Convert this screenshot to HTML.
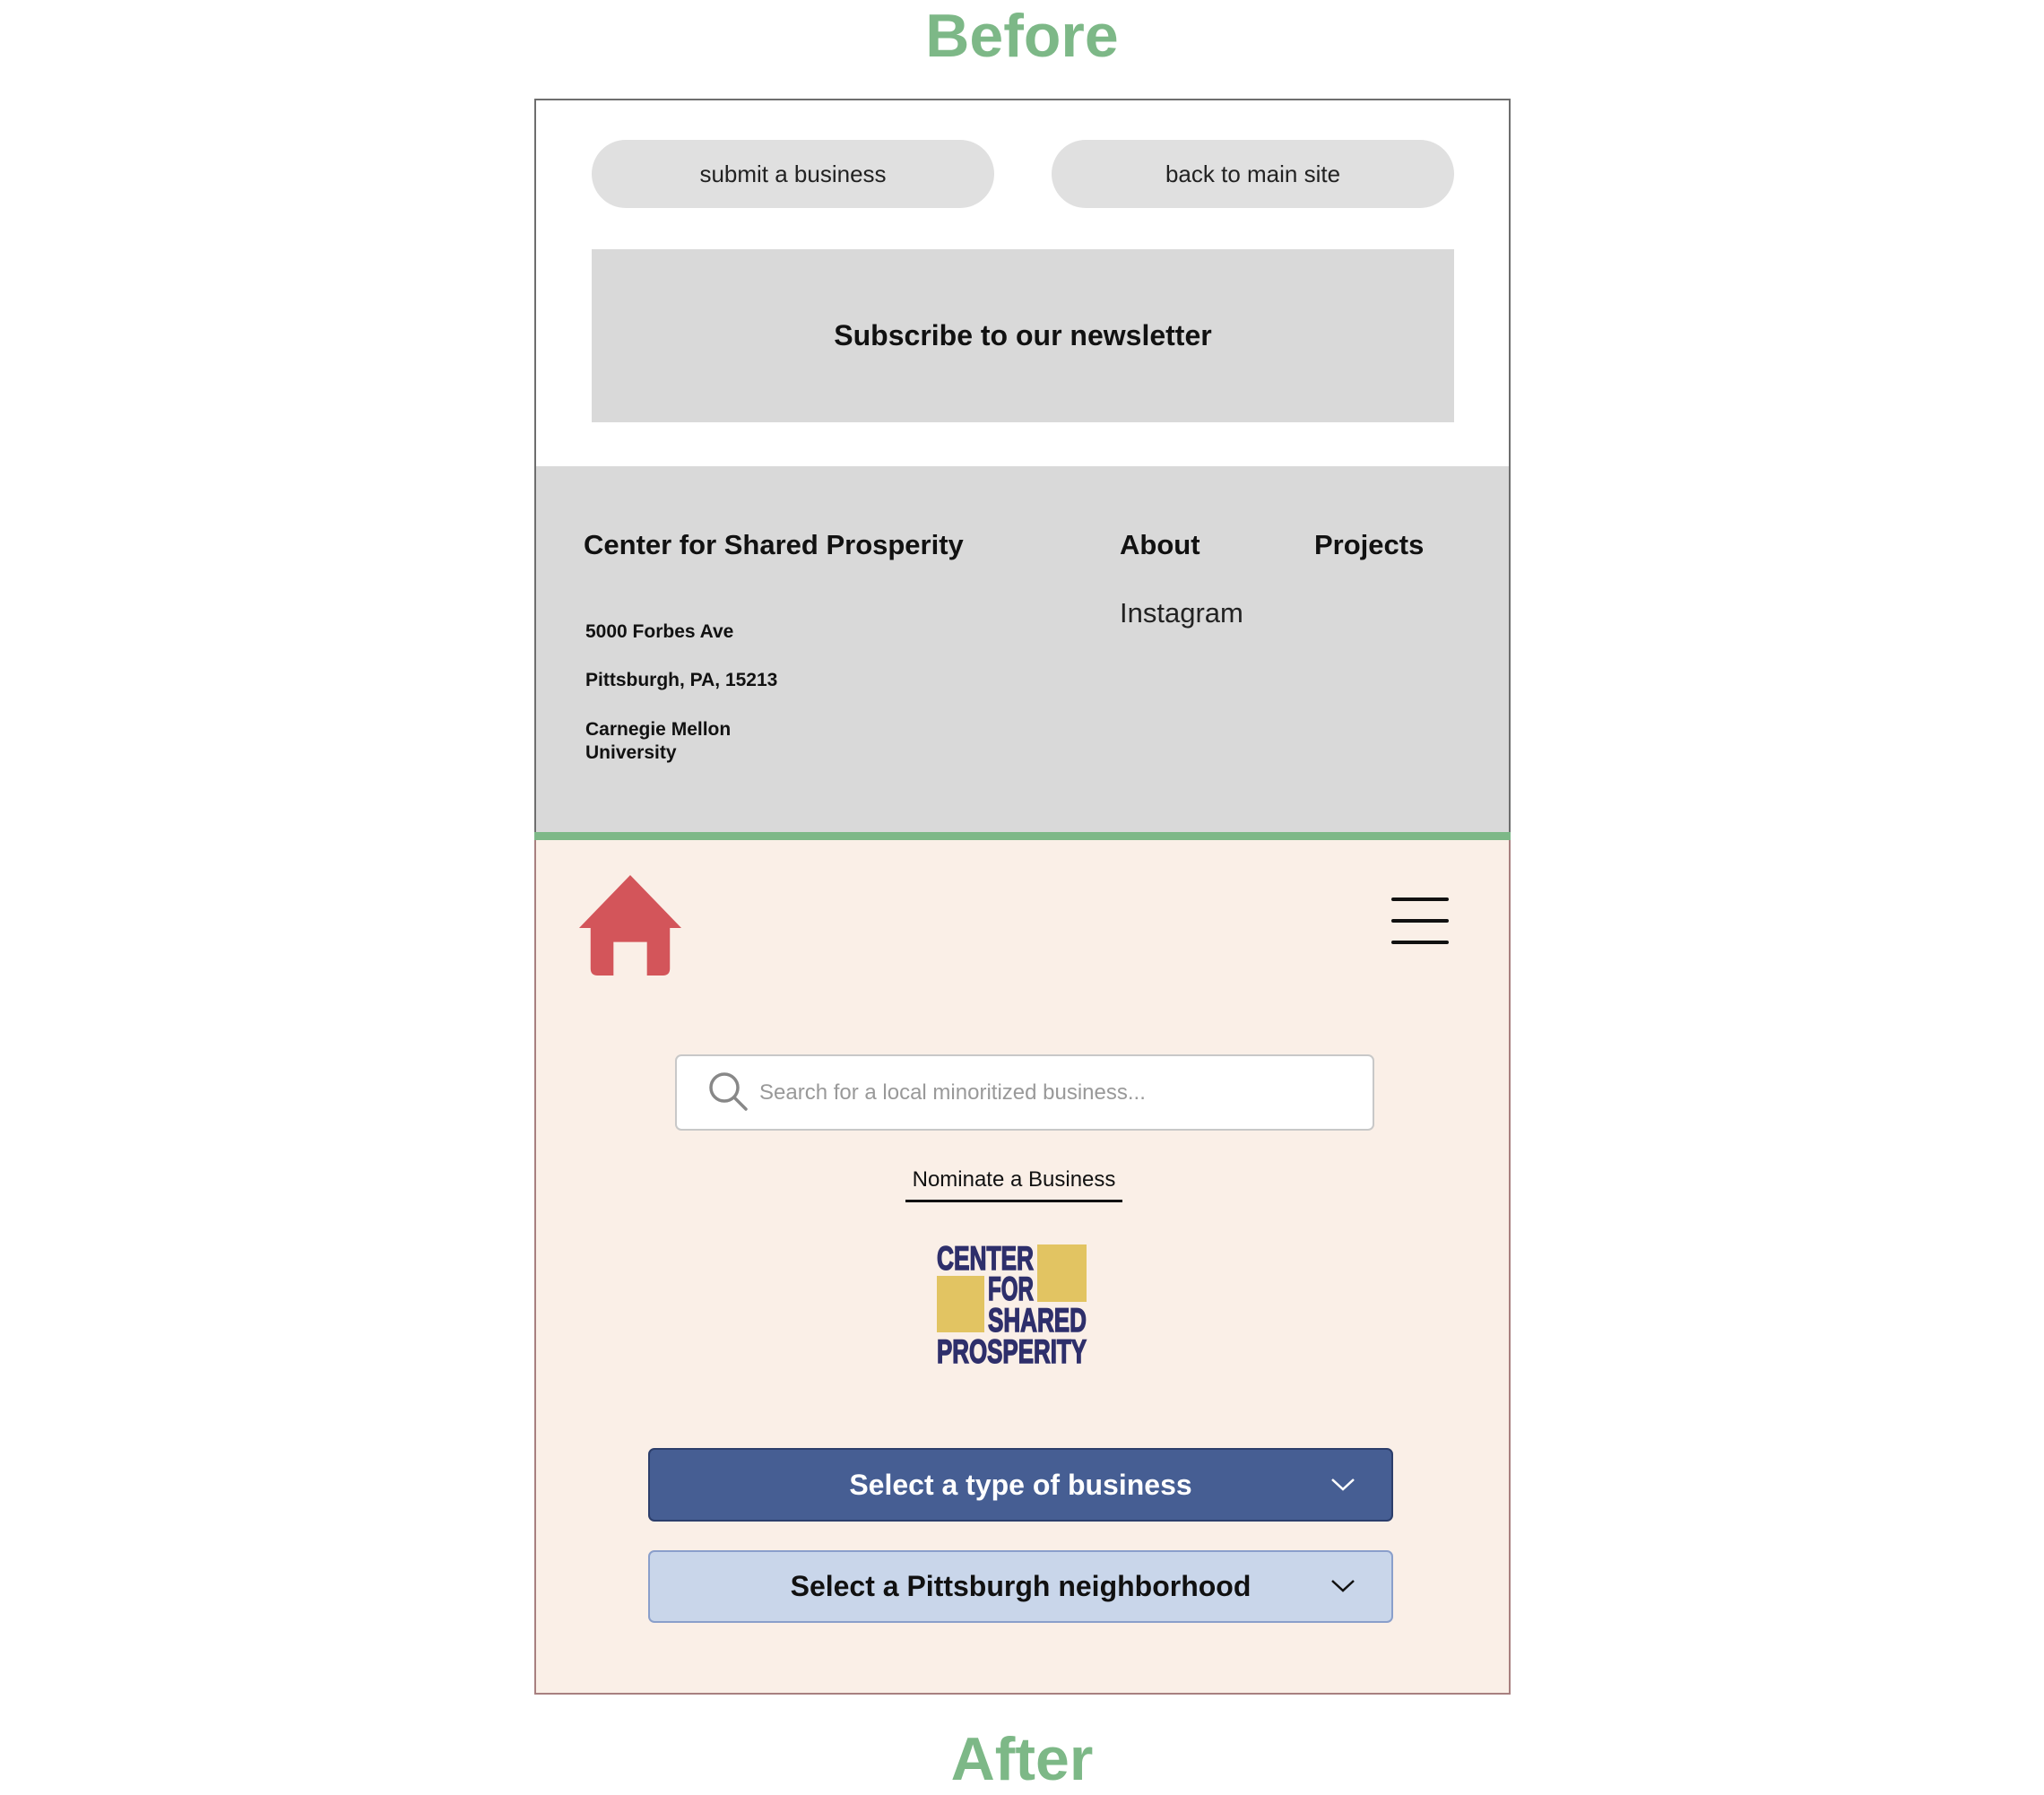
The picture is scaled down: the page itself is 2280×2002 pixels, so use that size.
<!DOCTYPE html>
<html><head><meta charset="utf-8"><style>
*{margin:0;padding:0;box-sizing:border-box}
body{width:2280px;height:2002px;background:#fff;position:relative;font-family:"Liberation Sans",sans-serif;overflow:hidden}
.a{position:absolute}
.title{color:#7db887;font-weight:bold;font-size:68px;width:2280px;text-align:center;left:0}
.pill{background:#e0e0e0;border-radius:38px;height:76px;width:449px;top:156px;font-size:26px;color:#222;text-align:center;line-height:76px}
.ft{font-weight:bold;color:#111}
</style></head><body>
<div class="a title" style="top:0;line-height:80px">Before</div>
<div class="a" style="left:596px;top:110px;width:1089px;height:1780px;border:2px solid #6e6e6e;background:#fff"></div>
<div class="a pill" style="left:660px">submit a business</div>
<div class="a pill" style="left:1173px">back to main site</div>
<div class="a" style="left:660px;top:278px;width:962px;height:193px;background:#d9d9d9;text-align:center;line-height:193px;font-weight:bold;font-size:32px;color:#111">Subscribe to our newsletter</div>
<div class="a" style="left:598px;top:520px;width:1085px;height:408px;background:#d9d9d9"></div>
<div class="a ft" style="left:651px;top:590px;font-size:31px">Center for Shared Prosperity</div>
<div class="a ft" style="left:1249px;top:590px;font-size:31px">About</div>
<div class="a ft" style="left:1466px;top:590px;font-size:31px">Projects</div>
<div class="a" style="left:1249px;top:666px;font-size:31px;color:#222">Instagram</div>
<div class="a ft" style="left:653px;top:693px;font-size:21px">5000 Forbes Ave</div>
<div class="a ft" style="left:653px;top:747px;font-size:21px">Pittsburgh, PA, 15213</div>
<div class="a ft" style="left:653px;top:801px;font-size:21px;line-height:26px">Carnegie Mellon<br>University</div>
<div class="a" style="left:596px;top:928px;width:1089px;height:9px;background:#7db887"></div>
<div class="a" style="left:596px;top:937px;width:1089px;height:953px;background:#faefe7;border:2px solid #a88080;border-top:none"></div>
<svg class="a" style="left:645px;top:974px" width="116" height="116" viewBox="0 0 118 118">
<path d="M59 2 L117 62 L104 62 L104 108 Q104 116 96 116 L78 116 L78 78 L40 78 L40 116 L22 116 Q14 116 14 108 L14 62 L1 62 Z" fill="#d3555a"/>
</svg>
<div class="a" style="left:1552px;top:1001px;width:64px;height:4px;background:#111;border-radius:2px"></div>
<div class="a" style="left:1552px;top:1025px;width:64px;height:4px;background:#111;border-radius:2px"></div>
<div class="a" style="left:1552px;top:1049px;width:64px;height:4px;background:#111;border-radius:2px"></div>
<div class="a" style="left:753px;top:1176px;width:780px;height:85px;background:#fff;border:2px solid #c8c8c8;border-radius:7px"></div>
<svg class="a" style="left:790px;top:1195px" width="46" height="46" viewBox="0 0 46 46"><circle cx="18" cy="18" r="15" fill="none" stroke="#888" stroke-width="3.5"/><path d="M29 29 L42 42" stroke="#888" stroke-width="3.5" stroke-linecap="round"/></svg>
<div class="a" style="left:847px;top:1204px;font-size:24px;color:#999;line-height:30px">Search for a local minoritized business...</div>
<div class="a" style="left:1010px;top:1302px;width:242px;text-align:center;font-size:24px;color:#111">Nominate a Business</div>
<div class="a" style="left:1010px;top:1338px;width:242px;height:3px;background:#111"></div>
<svg class="a" style="left:1045px;top:1388px" width="168" height="134" viewBox="0 0 168 134">
<rect x="0" y="35" width="53" height="63" fill="#e2c462"/>
<rect x="112" y="0" width="55" height="64" fill="#e2c462"/>
<g fill="#2e2f6b" stroke="#2e2f6b" stroke-width="1.5" font-family="Liberation Sans Narrow,Liberation Sans,sans-serif" font-weight="bold" font-size="37">
<text x="0" y="28" textLength="108" lengthAdjust="spacingAndGlyphs">CENTER</text>
<text x="57" y="62" textLength="51" lengthAdjust="spacingAndGlyphs">FOR</text>
<text x="57" y="97" textLength="110" lengthAdjust="spacingAndGlyphs">SHARED</text>
<text x="0" y="132" textLength="167" lengthAdjust="spacingAndGlyphs">PROSPERITY</text>
</g></svg>
<div class="a" style="left:723px;top:1615px;width:831px;height:82px;background:#465e93;border:2px solid #2c3e6b;border-radius:7px;color:#fff;font-weight:bold;font-size:32px;line-height:78px;text-align:center">Select a type of business</div>
<svg class="a" style="left:1484px;top:1648px" width="28" height="16" viewBox="0 0 28 16"><path d="M2 2 L14 13 L26 2" fill="none" stroke="#fff" stroke-width="2.5"/></svg>
<div class="a" style="left:723px;top:1729px;width:831px;height:81px;background:#c9d6ea;border:2px solid #8a9fcb;border-radius:7px;color:#111;font-weight:bold;font-size:32px;line-height:77px;text-align:center">Select a Pittsburgh neighborhood</div>
<svg class="a" style="left:1484px;top:1761px" width="28" height="16" viewBox="0 0 28 16"><path d="M2 2 L14 13 L26 2" fill="none" stroke="#111" stroke-width="2.5"/></svg>
<div class="a title" style="top:1922px;line-height:80px">After</div>
</body></html>
